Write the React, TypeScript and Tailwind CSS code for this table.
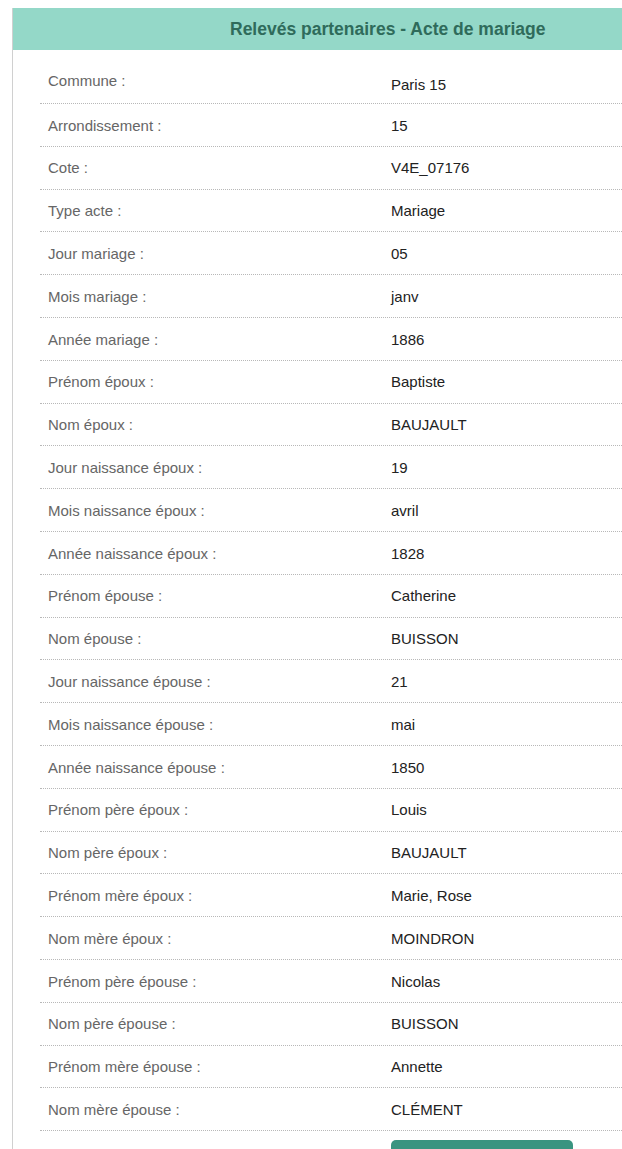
import React from "react";

const rows: [string, string][] = [
  ["Commune :", "Paris 15"],
  ["Arrondissement :", "15"],
  ["Cote :", "V4E_07176"],
  ["Type acte :", "Mariage"],
  ["Jour mariage :", "05"],
  ["Mois mariage :", "janv"],
  ["Année mariage :", "1886"],
  ["Prénom époux :", "Baptiste"],
  ["Nom époux :", "BAUJAULT"],
  ["Jour naissance époux :", "19"],
  ["Mois naissance époux :", "avril"],
  ["Année naissance époux :", "1828"],
  ["Prénom épouse :", "Catherine"],
  ["Nom épouse :", "BUISSON"],
  ["Jour naissance épouse :", "21"],
  ["Mois naissance épouse :", "mai"],
  ["Année naissance épouse :", "1850"],
  ["Prénom père époux :", "Louis"],
  ["Nom père époux :", "BAUJAULT"],
  ["Prénom mère époux :", "Marie, Rose"],
  ["Nom mère époux :", "MOINDRON"],
  ["Prénom père épouse :", "Nicolas"],
  ["Nom père épouse :", "BUISSON"],
  ["Prénom mère épouse :", "Annette"],
  ["Nom mère épouse :", "CLÉMENT"],
];

export default function App() {
  return (
    <div
      className="w-[622px] h-[1149px] overflow-hidden bg-white pt-[8px] pl-[12px]"
      style={{ fontFamily: '"Liberation Sans", Arial, sans-serif' }}
    >
      <div className="border-l border-[#d0d0d0] h-full">
        <div className="h-[42px] bg-[#94d8c8] flex items-center pl-[217px]">
          <h1 className="text-[17.5px] font-bold text-[#2f6b5b] whitespace-nowrap">
            Relevés partenaires - Acte de mariage
          </h1>
        </div>
        <div className="pl-[27px]">
          {rows.map(([label, value], i) => (
            <div
              key={label}
              className={
                i === 0
                  ? "flex h-[54px] border-b border-dotted border-[#b8b8b8] text-[15px]"
                  : "flex h-[42.8px] items-center pt-[2px] border-b border-dotted border-[#b8b8b8] text-[15px]"
              }
            >
              <div
                className={
                  i === 0
                    ? "w-[351px] pl-[8px] pt-[20px] text-[#666666]"
                    : "w-[351px] pl-[8px] text-[#666666]"
                }
              >
                {label}
              </div>
              <div className={i === 0 ? "flex-1 pt-[24px] text-[#222222]" : "flex-1 text-[#222222]"}>
                {value}
              </div>
            </div>
          ))}
          <div className="pl-[351px] pt-[9px]">
            <div className="w-[182px] h-[40px] rounded-t-[5px] bg-[#3a9480]" />
          </div>
        </div>
      </div>
    </div>
  );
}
